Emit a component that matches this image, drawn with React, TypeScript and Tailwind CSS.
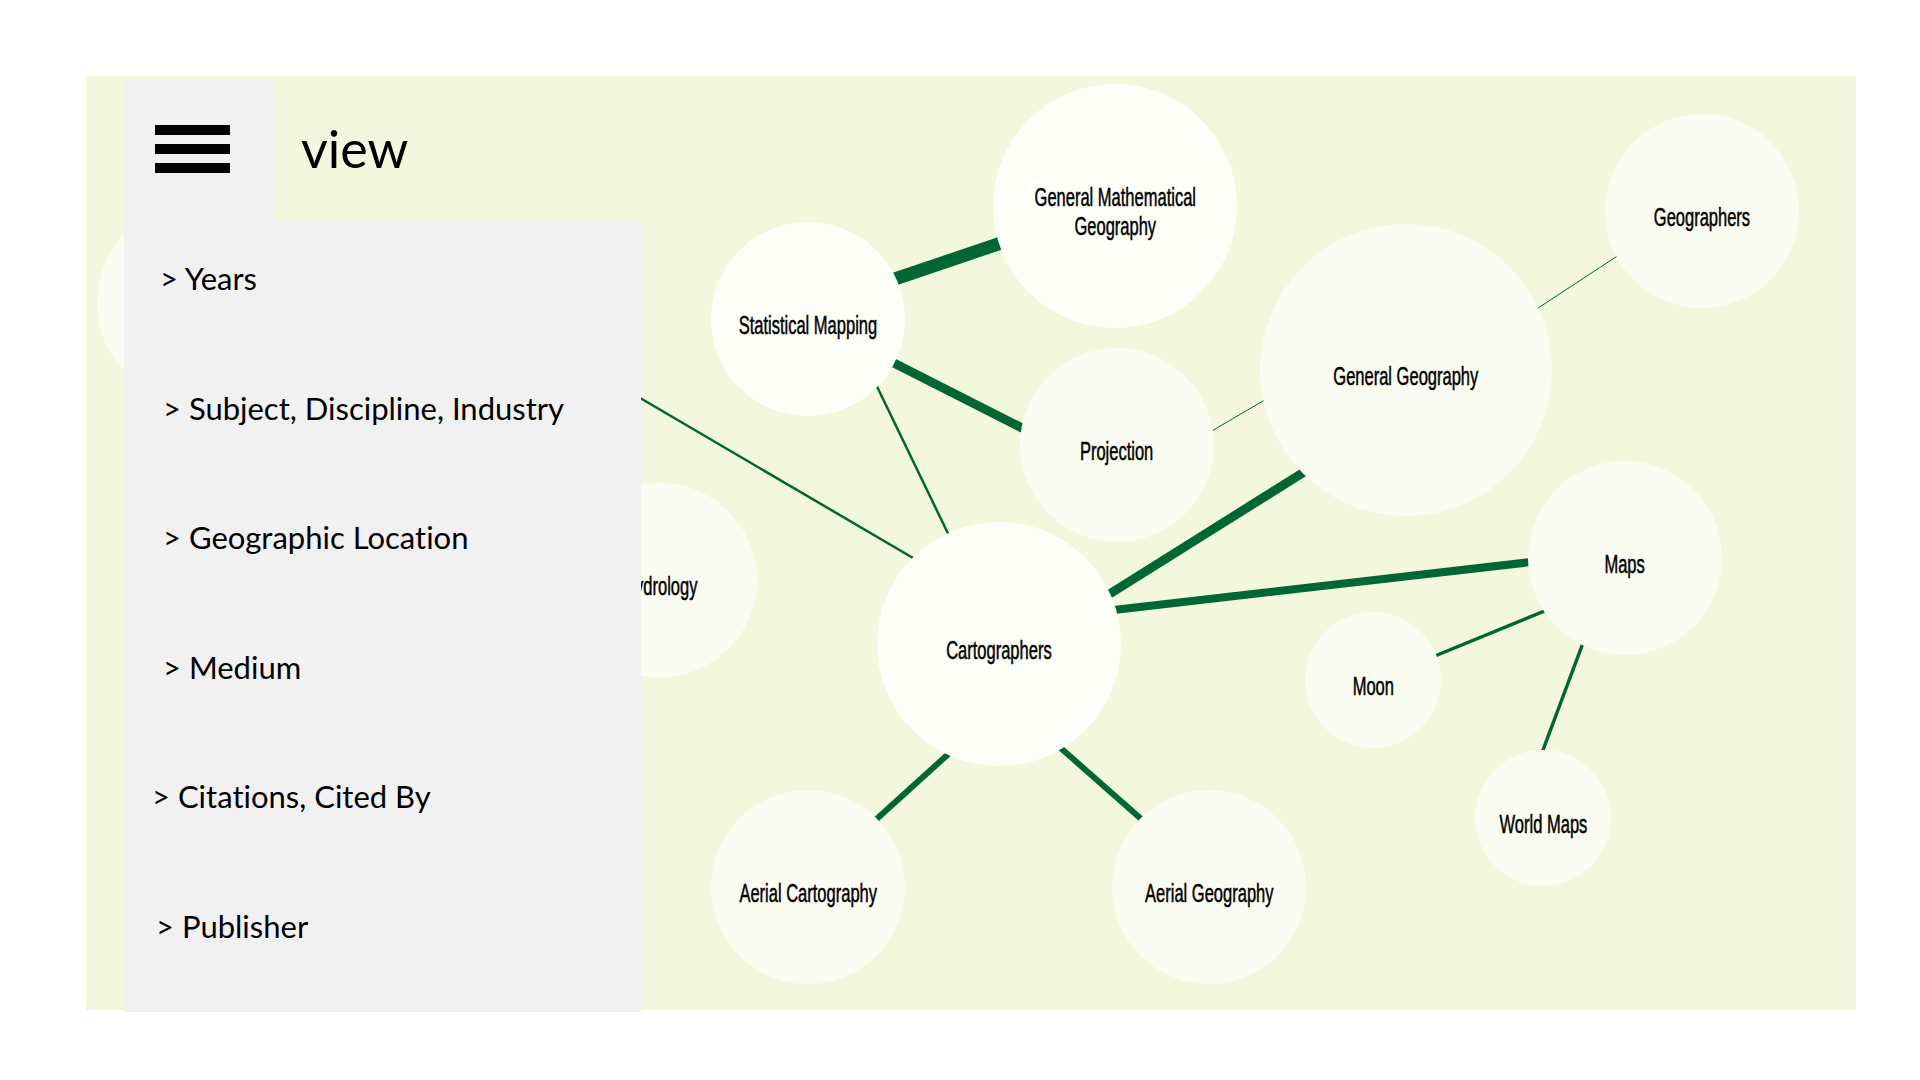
import React from 'react';

type Node = { label: string[]; x: number; y: number; r: number; bright?: boolean };
type Edge = { x1: number; y1: number; x2: number; y2: number; w: number };

// canvas origin is (86, 76) on the page
const OX = 86;
const OY = 76;

const nodes: Node[] = [
  { label: [''], x: 197, y: 303, r: 100 },
  { label: ['Hydrology'], x: 660, y: 580, r: 97 },
  { label: ['General Mathematical', 'Geography'], x: 1115, y: 206, r: 122, bright: true },
  { label: ['Statistical Mapping'], x: 808, y: 319, r: 97, bright: true },
  { label: ['Projection'], x: 1117, y: 445, r: 97 },
  { label: ['General Geography'], x: 1406, y: 370, r: 146 },
  { label: ['Geographers'], x: 1702, y: 211, r: 97 },
  { label: ['Maps'], x: 1625, y: 558, r: 97 },
  { label: ['Cartographers'], x: 999, y: 644, r: 122, bright: true },
  { label: ['Moon'], x: 1373, y: 680, r: 68 },
  { label: ['World Maps'], x: 1543, y: 818, r: 68 },
  { label: ['Aerial Cartography'], x: 808, y: 887, r: 97 },
  { label: ['Aerial Geography'], x: 1209, y: 887, r: 97 },
];

const edges: Edge[] = [
  { x1: 880, y1: 284, x2: 1010, y2: 240, w: 13 },
  { x1: 880, y1: 356, x2: 1030, y2: 432, w: 9 },
  { x1: 870, y1: 372, x2: 955, y2: 548, w: 2.5 },
  { x1: 560, y1: 351, x2: 925, y2: 565, w: 2.5 },
  { x1: 1205, y1: 435, x2: 1268, y2: 398, w: 1 },
  { x1: 1100, y1: 600, x2: 1312, y2: 467, w: 9 },
  { x1: 1105, y1: 611, x2: 1540, y2: 561, w: 8 },
  { x1: 1535, y1: 310, x2: 1622, y2: 253, w: 1 },
  { x1: 1430, y1: 658, x2: 1552, y2: 608, w: 3.5 },
  { x1: 1586, y1: 635, x2: 1540, y2: 758, w: 3.5 },
  { x1: 955, y1: 748, x2: 870, y2: 825, w: 6 },
  { x1: 1055, y1: 743, x2: 1148, y2: 825, w: 6 },
];

const menu = [
  { text: '> Years', pl: 'pl-[36px]' },
  { text: '> Subject, Discipline, Industry', pl: 'pl-[39px]' },
  { text: '> Geographic Location', pl: 'pl-[39px]' },
  { text: '> Medium', pl: 'pl-[39px]' },
  { text: '> Citations, Cited By', pl: 'pl-[28px]' },
  { text: '> Publisher', pl: 'pl-[32px]' },
];

const GraphNode: React.FC<{ node: Node }> = ({ node }) => (
  <div
    className={`absolute rounded-full flex items-center justify-center pt-[12px] ${node.bright ? 'bg-[#fdfef8]' : 'bg-[#fafcf1]'}`}
    style={{ left: node.x - OX - node.r, top: node.y - OY - node.r, width: node.r * 2, height: node.r * 2 }}
  >
    <div className="scale-x-[0.66] text-center whitespace-nowrap text-[25px] leading-[29px] text-black [-webkit-text-stroke:0.5px_black] font-['Liberation_Sans',Arial,sans-serif]">
      {node.label.map((l, i) => (
        <div key={i}>{l}</div>
      ))}
    </div>
  </div>
);

export default function App() {
  return (
    <div className="w-full h-screen bg-white pl-[86px] pt-[76px] font-['Lato','Noto_Sans',sans-serif] [font-variant-ligatures:none]">
      <div className="relative w-[1770px] h-[934px] bg-[#f3f7dd]">
        {/* edges */}
        <svg className="absolute inset-0" width="1770" height="934">
          {edges.map((e, i) => (
            <line
              key={i}
              x1={e.x1 - OX}
              y1={e.y1 - OY}
              x2={e.x2 - OX}
              y2={e.y2 - OY}
              stroke="#006633"
              strokeWidth={e.w}
            />
          ))}
        </svg>

        {nodes.map((n, i) => (
          <GraphNode key={i} node={n} />
        ))}

        {/* view menu */}
        <div className="absolute left-[38px] top-[4px] flex flex-col">
          <div className="flex items-start">
            <div className="w-[149px] h-[142px] bg-[#f1f1f1] pl-[31px] pt-[45px] flex flex-col gap-[9px]">
              <div className="w-[75px] h-[10px] bg-black" />
              <div className="w-[75px] h-[10px] bg-black" />
              <div className="w-[75px] h-[10px] bg-black" />
            </div>
            <div className="ml-[28px] mt-[42px] text-[52px] leading-[52px] text-black">view</div>
          </div>
          <div className="w-[517px] h-[790px] bg-[#f1f1f1] pt-[36px] flex flex-col">
            {menu.map((m) => (
              <div key={m.text} className={`h-[129.6px] shrink-0 ${m.pl} text-[31px] leading-[40px] text-black`}>
                {m.text}
              </div>
            ))}
          </div>
        </div>
      </div>
    </div>
  );
}
